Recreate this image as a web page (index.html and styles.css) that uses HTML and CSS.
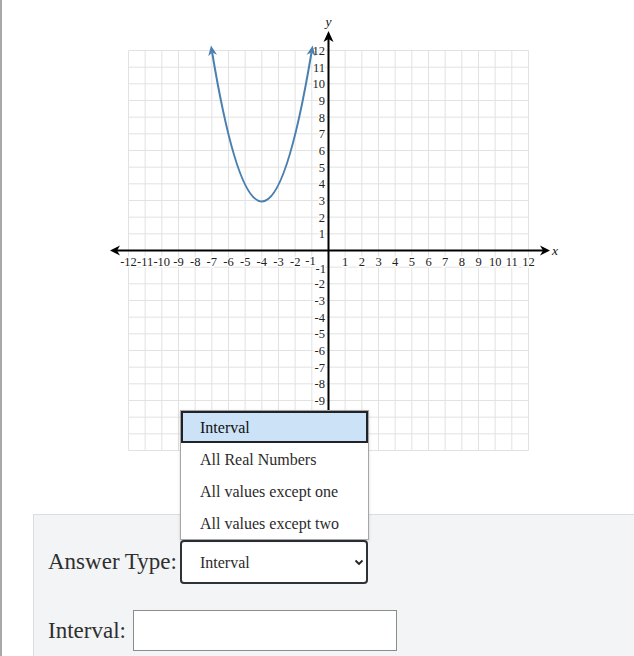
FILE: index.html
```html
<!DOCTYPE html>
<html>
<head>
<meta charset="utf-8">
<link rel="stylesheet" href="styles.css">
</head>
<body>
<div class="page">
  <svg class="graph" width="632" height="514" viewBox="2 0 632 514" xmlns="http://www.w3.org/2000/svg">
    <g transform="translate(328.5 250.5) scale(16.6667)" class="grid">
      <path vector-effect="non-scaling-stroke" d="M-12 -12V12M-11 -12V12M-10 -12V12M-9 -12V12M-8 -12V12M-7 -12V12M-6 -12V12M-5 -12V12M-4 -12V12M-3 -12V12M-2 -12V12M-1 -12V12M0 -12V12M1 -12V12M2 -12V12M3 -12V12M4 -12V12M5 -12V12M6 -12V12M7 -12V12M8 -12V12M9 -12V12M10 -12V12M11 -12V12M12 -12V12M-12 -12H12M-12 -11H12M-12 -10H12M-12 -9H12M-12 -8H12M-12 -7H12M-12 -6H12M-12 -5H12M-12 -4H12M-12 -3H12M-12 -2H12M-12 -1H12M-12 0H12M-12 1H12M-12 2H12M-12 3H12M-12 4H12M-12 5H12M-12 6H12M-12 7H12M-12 8H12M-12 9H12M-12 10H12M-12 11H12M-12 12H12"/>
    </g>
    <g class="xlabels">
      <text x="128.5" y="266">-12</text><text x="145.2" y="266">-11</text><text x="161.8" y="266">-10</text><text x="178.5" y="266">-9</text><text x="195.2" y="266">-8</text><text x="211.8" y="266">-7</text><text x="228.5" y="266">-6</text><text x="245.2" y="266">-5</text><text x="261.8" y="266">-4</text><text x="278.5" y="266">-3</text><text x="295.2" y="266">-2</text><text x="310.5" y="265">-1</text>
      <text x="345.2" y="266">1</text><text x="361.8" y="266">2</text><text x="378.5" y="266">3</text><text x="395.2" y="266">4</text><text x="411.8" y="266">5</text><text x="428.5" y="266">6</text><text x="445.2" y="266">7</text><text x="461.8" y="266">8</text><text x="478.5" y="266">9</text><text x="495.2" y="266">10</text><text x="511.8" y="266">11</text><text x="528.5" y="266">12</text>
    </g>
    <g class="ylabels">
      <text x="325" y="55">12</text><text x="325" y="71.7">11</text><text x="325" y="88.3">10</text><text x="325" y="105">9</text><text x="325" y="121.7">8</text><text x="325" y="138.3">7</text><text x="325" y="155">6</text><text x="325" y="171.7">5</text><text x="325" y="188.3">4</text><text x="325" y="205">3</text><text x="325" y="221.7">2</text><text x="325" y="238.3">1</text>
      <text x="326" y="273">-1</text><text x="325" y="288.3">-2</text><text x="325" y="305">-3</text><text x="325" y="321.7">-4</text><text x="325" y="338.3">-5</text><text x="325" y="355">-6</text><text x="325" y="371.7">-7</text><text x="325" y="388.3">-8</text><text x="325" y="405">-9</text>
    </g>
    <g class="axes">
      <path d="M116 250.5H543M328.5 38V470"/>
      <polygon points="110,250.5 120,245.5 117,250.5 120,255.5"/>
      <polygon points="550,250.5 540,245.5 543,250.5 540,255.5"/>
      <polygon points="328.5,31 323.5,42 328.5,39 333.5,42"/>
    </g>
    <text class="axisname" x="555" y="255">x</text>
    <text class="axisname" x="328.5" y="26">y</text>
    <g class="curve">
      <path d="M212.15 52.5Q261.83 350.5 311.5 52.5"/>
      <polygon points="211,45.6 217.05,54.76 212.15,52.5 208.25,56.24"/>
      <polygon points="312.65,45.6 315.4,56.2 311.5,52.5 306.6,54.8"/>
    </g>
  </svg>

  <div class="panel">
    <div class="row row1">
      <label class="lbl" for="atype">Answer Type:</label>
      <span class="selectwrap">
        <select id="atype" class="sel">
          <option>Interval</option>
          <option>All Real Numbers</option>
          <option>All values except one</option>
          <option>All values except two</option>
        </select>
        <svg class="chev" width="10" height="7" viewBox="0 0 10 7"><path d="M1.5 1.5L5 5L8.5 1.5"/></svg>
      </span>
    </div>
    <div class="row row2">
      <label class="lbl" for="ival">Interval:</label>
      <input id="ival" class="inp" type="text">
    </div>
  </div>

  <ul class="menu">
    <li class="opt active">Interval</li>
    <li class="opt">All Real Numbers</li>
    <li class="opt">All values except one</li>
    <li class="opt">All values except two</li>
  </ul>
</div>
</body>
</html>
```

FILE: styles.css
```css
html, body {
  margin: 0;
  padding: 0;
  background: #fff;
  overflow: hidden;
}
body {
  font-family: "Liberation Serif", "Times New Roman", serif;
  color: #2b2b2b;
}
.page {
  position: relative;
  width: 632px;
  height: 656px;
  border-left: 2px solid #a8a8a8;
}
.graph {
  display: block;
}
.grid path {
  fill: none;
  stroke: #e2e2e2;
  stroke-width: 1;
}
.xlabels text, .ylabels text {
  font-family: "Liberation Serif", serif;
  font-size: 12.5px;
  fill: #222;
  stroke: #fff;
  stroke-width: 3px;
  paint-order: stroke;
}
.xlabels text { text-anchor: middle; }
.ylabels text { text-anchor: end; }
.axes path {
  fill: none;
  stroke: #000;
  stroke-width: 2;
}
.axes polygon { fill: #000; }
.axisname {
  font-family: "Liberation Serif", serif;
  font-style: italic;
  font-size: 13.5px;
  fill: #111;
  text-anchor: middle;
}
.curve path {
  fill: none;
  stroke: #4a80b0;
  stroke-width: 2;
}
.curve polygon { fill: #4a80b0; }

.panel {
  margin-left: 31px;
  height: 142px;
  background: #f3f4f6;
  border-top: 1px solid #dddddd;
  border-left: 1px solid #dddddd;
  padding: 25px 0 0 14px;
  box-sizing: border-box;
}
.row {
  display: flex;
  align-items: center;
}
.row1 {
  gap: 3px;
}
.row2 {
  gap: 7px;
  margin-top: 26px;
}
.lbl {
  font-size: 23px;
  color: #2f2f2f;
}
.selectwrap {
  position: relative;
  display: inline-block;
}
.sel {
  appearance: none;
  -webkit-appearance: none;
  width: 188px;
  height: 44px;
  border: 2px solid #2d3138;
  border-radius: 4px;
  background: #fff;
  font-family: "Liberation Serif", serif;
  font-size: 16px;
  color: #2b2b2b;
  padding: 0 0 0 18px;
  display: block;
}
.chev {
  position: absolute;
  right: 4px;
  top: 19px;
}
.chev path {
  fill: none;
  stroke: #222;
  stroke-width: 1.8;
}
.inp {
  width: 264px;
  height: 41px;
  box-sizing: border-box;
  border: 1px solid #8c8c8c;
  background: #fff;
  margin: 0;
  padding: 0 6px;
  font-family: "Liberation Serif", serif;
  font-size: 16px;
}

.menu {
  position: absolute;
  left: 178px;
  top: 410px;
  width: 189px;
  height: 130px;
  box-sizing: border-box;
  margin: 0;
  padding: 0;
  list-style: none;
  background: #fff;
  border: 1px solid #a6a6a6;
  box-shadow: 0 1px 3px rgba(0,0,0,0.15);
}
.opt {
  height: 32px;
  line-height: 33px;
  box-sizing: border-box;
  padding-left: 19px;
  font-size: 16px;
  color: #2b2b2b;
}
.opt.active {
  height: 32px;
  line-height: 29px;
  background: #cce3f7;
  border: 2px solid #1f2227;
  padding-left: 17px;
  color: #111;
}
```
